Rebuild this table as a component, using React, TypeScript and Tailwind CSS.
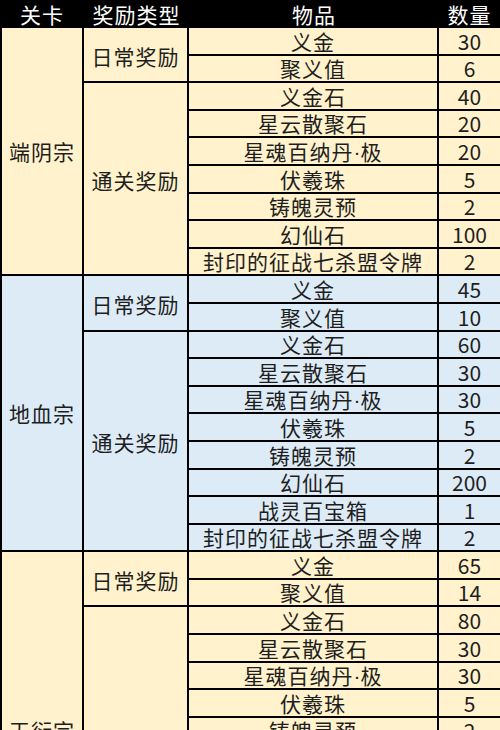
import React from "react";

type Item = [string, string];
type Group = { type: string; items: Item[] };
type Block = { stage: string; blue: boolean; groups: Group[] };

const data: Block[] = [
  {
    stage: "端阴宗",
    blue: false,
    groups: [
      { type: "日常奖励", items: [["义金", "30"], ["聚义值", "6"]] },
      {
        type: "通关奖励",
        items: [
          ["义金石", "40"],
          ["星云散聚石", "20"],
          ["星魂百纳丹·极", "20"],
          ["伏羲珠", "5"],
          ["铸魄灵预", "2"],
          ["幻仙石", "100"],
          ["封印的征战七杀盟令牌", "2"],
        ],
      },
    ],
  },
  {
    stage: "地血宗",
    blue: true,
    groups: [
      { type: "日常奖励", items: [["义金", "45"], ["聚义值", "10"]] },
      {
        type: "通关奖励",
        items: [
          ["义金石", "60"],
          ["星云散聚石", "30"],
          ["星魂百纳丹·极", "30"],
          ["伏羲珠", "5"],
          ["铸魄灵预", "2"],
          ["幻仙石", "200"],
          ["战灵百宝箱", "1"],
          ["封印的征战七杀盟令牌", "2"],
        ],
      },
    ],
  },
  {
    stage: "天衍宗",
    blue: false,
    groups: [
      { type: "日常奖励", items: [["义金", "65"], ["聚义值", "14"]] },
      {
        type: "通关奖励",
        items: [
          ["义金石", "80"],
          ["星云散聚石", "30"],
          ["星魂百纳丹·极", "30"],
          ["伏羲珠", "5"],
          ["铸魄灵预", "2"],
          ["幻仙石", "300"],
          ["战灵百宝箱", "1"],
          ["天衍灵玉", "3"],
          ["神兵碎片", "10"],
          ["宗门令", "5"],
          ["封印的征战七杀盟令牌", "3"],
        ],
      },
    ],
  },
];

const font = { fontFamily: '"Noto Sans CJK SC", "Noto Sans", sans-serif' };

function Name({ text }: { text: string }) {
  const parts = text.split("·");
  if (parts.length === 1) return <>{text}</>;
  return (
    <>
      {parts[0]}
      <span className="tracking-normal" style={{ fontFamily: '"Liberation Sans", sans-serif' }}>
        ·
      </span>
      {parts[1]}
    </>
  );
}

export default function App() {
  return (
    <div
      className="w-[500px] text-[21px] leading-[21px] text-[#1e1e1e] bg-white"
      style={font}
    >
      <div className="flex h-[28px] bg-black text-white tracking-[1px]">
        <div className="w-[84px] flex items-end justify-center pb-[3px]">关卡</div>
        <div className="w-[105px] flex items-end justify-center pb-[3px]">奖励类型</div>
        <div className="w-[250px] flex items-end justify-center pb-[3px]">物品</div>
        <div className="flex-1 flex items-end justify-center pb-[3px]">数量</div>
      </div>
      <div className="border-l-2 border-black">
        {data.map((b) => (
          <div
            key={b.stage}
            className={`flex ${b.blue ? "bg-[#DDEBF7]" : "bg-[#FFF2CC]"}`}
          >
            <div className="w-[82px] shrink-0 border-r-2 border-b-2 border-black flex items-center justify-center tracking-[1px]">
              {b.stage}
            </div>
            <div className="flex-1 flex flex-col">
              {b.groups.map((g) => (
                <div key={g.type} className="flex">
                  <div className="w-[105px] shrink-0 border-r-2 border-b-2 border-black flex items-center justify-center pt-[3px] tracking-[1px]">
                    {g.type}
                  </div>
                  <div className="flex-1 flex flex-col">
                    {g.items.map(([name, qty]) => (
                      <div
                        key={name}
                        className="flex h-[27.6px] border-b-2 border-black"
                      >
                        <div className="w-[250px] shrink-0 border-r-2 border-black flex items-end justify-center pb-[2px] tracking-[1px]">
                          <Name text={name} />
                        </div>
                        <div className="flex-1 flex items-end justify-center pb-[2px]">
                          {qty}
                        </div>
                      </div>
                    ))}
                  </div>
                </div>
              ))}
            </div>
          </div>
        ))}
      </div>
    </div>
  );
}
